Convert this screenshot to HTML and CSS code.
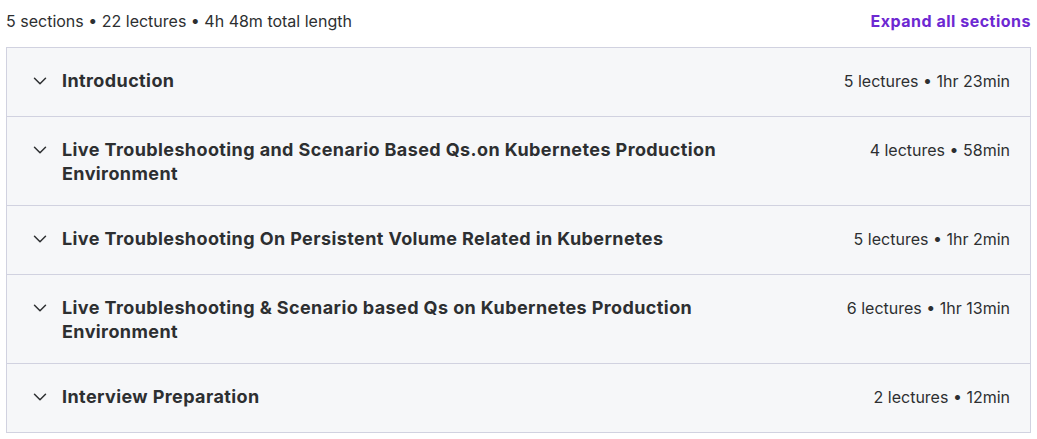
FILE: index.html
```html
<!DOCTYPE html>
<html>
<head>
<meta charset="utf-8">
<link rel="stylesheet" href="styles.css">
</head>
<body>
<div class="curriculum">
  <div class="summary">
    <span class="summary-text">5 sections • 22 lectures • 4h 48m total length</span>
    <button class="expand">Expand all sections</button>
  </div>
  <div class="sections">
    <div class="section">
      <div class="section-head">
        <svg class="chev" viewBox="0 0 16 16"><path d="M2.5 5.2L8 10.7l5.5-5.5" fill="none" stroke="currentColor" stroke-width="1.5" stroke-linecap="round" stroke-linejoin="round"/></svg>
        <span class="title">Introduction</span>
        <span class="meta">5 lectures • 1hr 23min</span>
      </div>
    </div>
    <div class="section">
      <div class="section-head">
        <svg class="chev" viewBox="0 0 16 16"><path d="M2.5 5.2L8 10.7l5.5-5.5" fill="none" stroke="currentColor" stroke-width="1.5" stroke-linecap="round" stroke-linejoin="round"/></svg>
        <span class="title">Live Troubleshooting and Scenario Based Qs.on Kubernetes Production Environment</span>
        <span class="meta">4 lectures • 58min</span>
      </div>
    </div>
    <div class="section">
      <div class="section-head">
        <svg class="chev" viewBox="0 0 16 16"><path d="M2.5 5.2L8 10.7l5.5-5.5" fill="none" stroke="currentColor" stroke-width="1.5" stroke-linecap="round" stroke-linejoin="round"/></svg>
        <span class="title">Live Troubleshooting On Persistent Volume Related in Kubernetes</span>
        <span class="meta">5 lectures • 1hr 2min</span>
      </div>
    </div>
    <div class="section">
      <div class="section-head">
        <svg class="chev" viewBox="0 0 16 16"><path d="M2.5 5.2L8 10.7l5.5-5.5" fill="none" stroke="currentColor" stroke-width="1.5" stroke-linecap="round" stroke-linejoin="round"/></svg>
        <span class="title">Live Troubleshooting &amp; Scenario based Qs on Kubernetes Production Environment</span>
        <span class="meta">6 lectures • 1hr 13min</span>
      </div>
    </div>
    <div class="section">
      <div class="section-head">
        <svg class="chev" viewBox="0 0 16 16"><path d="M2.5 5.2L8 10.7l5.5-5.5" fill="none" stroke="currentColor" stroke-width="1.5" stroke-linecap="round" stroke-linejoin="round"/></svg>
        <span class="title">Interview Preparation</span>
        <span class="meta">2 lectures • 12min</span>
      </div>
    </div>
  </div>
</div>
</body>
</html>
```
FILE: styles.css
```css
* { box-sizing: border-box; }
body {
  margin: 0;
  background: #ffffff;
  font-family: Inter, "Liberation Sans", sans-serif;
  color: #2d2f31;
}
.curriculum {
  width: 1031px;
  padding: 0 0 0 6px;
}
.summary {
  display: flex;
  justify-content: space-between;
  align-items: center;
  height: 47px;
  padding-bottom: 6px;
}
.summary-text {
  font-size: 16px;
  font-weight: 400;
  color: #2d2f31;
}
.expand {
  border: 0;
  background: none;
  padding: 0;
  font-family: inherit;
  font-size: 16px;
  font-weight: 700;
  letter-spacing: 0.5px;
  color: #6d28d2;
  cursor: pointer;
}
.sections {
  border: 1px solid #d1d2e0;
  background: #f6f7f9;
}
.section + .section {
  border-top: 1px solid #d1d2e0;
}
.section-head {
  display: flex;
  align-items: flex-start;
  padding: 21px 20px 19px 25px;
  min-height: 68px;
}
.chev {
  width: 16px;
  height: 16px;
  flex: none;
  margin-top: 4px;
  color: #2d2f31;
  margin-right: 14px;
}
.title {
  flex: 1;
  max-width: 700px;
  font-size: 18px;
  font-weight: 700;
  letter-spacing: 0.4px;
  line-height: 24px;
  color: #2d2f31;
}
.meta {
  margin-left: auto;
  font-size: 16px;
  font-weight: 400;
  line-height: 24px;
  color: #2d2f31;
  white-space: nowrap;
}
```
